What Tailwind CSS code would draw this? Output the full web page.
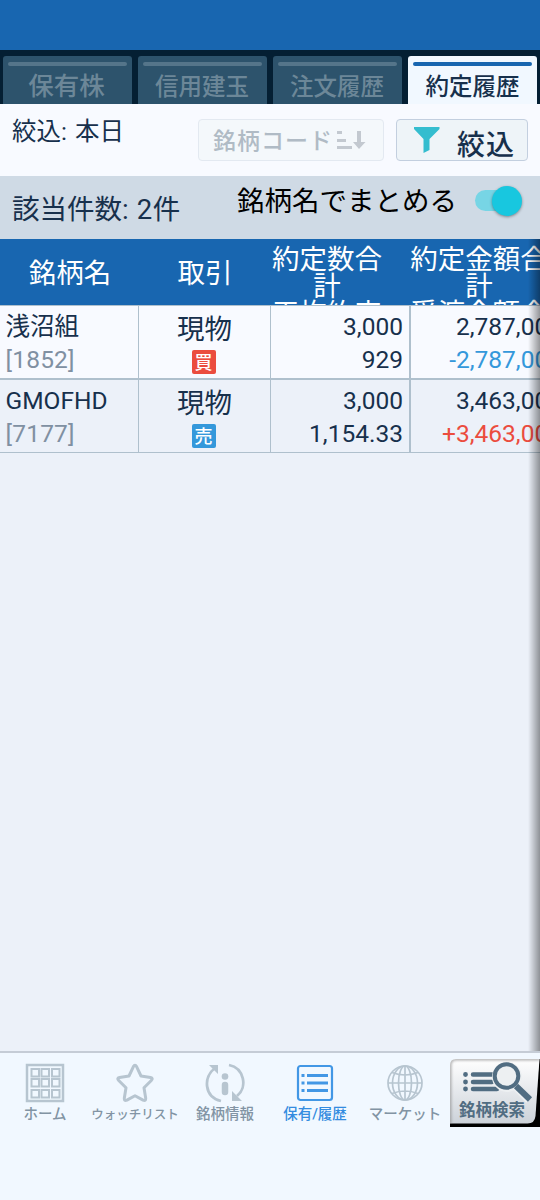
<!DOCTYPE html>
<html lang="ja">
<head>
<meta charset="utf-8">
<title>約定履歴</title>
<script src="https://cdn.jsdelivr.net/npm/@tailwindcss/browser@4"></script>
</head>
<body class="w-[540px] h-[1200px] overflow-hidden bg-[#ecf1f9] text-[#17304c] font-['Roboto','Noto_Sans_CJK_JP',sans-serif] whitespace-nowrap">
<div class="flex flex-col h-[1200px] w-[540px] overflow-hidden">
  <div class="h-[50px] bg-[#1866b0] shrink-0"></div>

  <nav class="h-[54px] shrink-0 bg-[#041f33] pt-[6px] px-[3px] flex gap-[6px] font-medium text-[23.500px] text-[#6c8798] text-center">
    <div class="w-[129px] bg-[#2d536c] rounded-t-[3px] px-[5px] pt-[6px]"><div class="h-1 rounded-full bg-[#55758a]"></div><div class="text-[25.500px] leading-[41px] pr-[2px]">保有株</div></div>
    <div class="w-[129px] bg-[#2d536c] rounded-t-[3px] px-[5px] pt-[6px]"><div class="h-1 rounded-full bg-[#55758a]"></div><div class="leading-[43px] pr-px">信用建玉</div></div>
    <div class="w-[129px] bg-[#2d536c] rounded-t-[3px] px-[5px] pt-[6px]"><div class="h-1 rounded-full bg-[#55758a]"></div><div class="leading-[43px] pr-px">注文履歴</div></div>
    <div class="w-[129px] bg-[#f1f8ff] text-[#17304c] rounded-t-[3px] px-[5px] pt-[6px]"><div class="h-1 rounded-full bg-[#1866b0]"></div><div class="leading-[43px]">約定履歴</div></div>
  </nav>

  <section class="h-[72px] shrink-0 bg-[#f8faff] flex items-start pl-3 pr-3">
    <div class="w-[186px] text-[24.500px] leading-[56px]">絞込<span class="tracking-[1px]">: </span>本日</div>
    <div class="mt-[15px] w-[186px] h-[42px] border border-[#e3e9f1] rounded-[4px] bg-[#f4f8fb] flex items-center pl-[14px] text-[#b0bbc5] text-[23px] font-medium">
      <span class="leading-[40px] tracking-[1px] pt-[3px]">銘柄コード</span>
      <svg class="ml-[3px]" width="30" height="24" viewBox="0 0 30 24" fill="#c3c9d0"><path d="M1 3h5v3H1zM1 11h9v3H1zM1 18h15v3H1zM21 3h4v11h4.500l-6.500 7-6-7h4z"/></svg>
    </div>
    <div class="ml-3 mt-[15px] w-[132px] h-[42px] border-[1.5px] border-[#c3cfdf] rounded-[4px] bg-[#eef4f8] flex items-center pl-[17px]">
      <svg width="26" height="26" viewBox="0 0 26 26" fill="#34bdcf"><path d="M0 0h25.500v2L15.500 12v11l-6 3V12L0 2z"/></svg>
      <span class="ml-[17px] text-[28px] leading-[40px] font-medium pt-[11px] tracking-[1px]">絞込</span>
    </div>
  </section>

  <section class="h-[63px] shrink-0 bg-[#cfdae5] flex text-[27.500px] pl-3">
    <div class="w-[225px] leading-[67px]">該当件数<span class="tracking-[.6px]">: 2</span>件</div>
    <div class="w-[220px] leading-[52px] text-black">銘柄名でまとめる</div>
    <div class="ml-[18px] mt-[14px] w-[40px] h-[21px] rounded-full bg-[#77d5e5] flex items-center"><div class="ml-[17px] w-[30px] h-[30px] rounded-full bg-[#18c7df] shadow-[0_1px_3px_#00000066] shrink-0"></div></div>
  </section>

  <main class="h-[812px] shrink-0 relative">
    <div class="w-[562px]">
      <div class="grid grid-cols-[138px_132px_140px_152px] h-[66px] overflow-hidden bg-[#1866b0] text-white text-[27.500px] text-center">
        <div class="leading-[69px] pl-[2px]">銘柄名</div>
        <div class="leading-[69px] pl-[2px]">取引</div>
        <div class="leading-[27px] pt-[6.500px] -ml-[26px]">約定数合<br>計<br>平均約定</div>
        <div class="leading-[27px] pt-[6.500px] -ml-[14px]">約定金額合<br>計<br>受渡金額合</div>
      </div>
      <div class="grid grid-cols-[139px_132px_140px_151px] h-[74px] border-t border-b border-[#afc0cd] bg-[#f8faff] text-[24.500px]">
        <div class="border-r border-[#afc0cd] pl-[5.500px] pt-[4px] leading-[33px]">浅沼組<br><span class="text-[#8090a2] tracking-[.2px]">[1852]</span></div>
        <div class="border-r border-[#afc0cd] flex flex-col items-center pt-[4px]"><div class="text-[27.500px] leading-[40px]">現物</div><div class="mr-[2px] w-6 h-6 rounded-[2px] bg-[#eb4c3e] text-white text-[18px] leading-[25px] font-medium text-center">買</div></div>
        <div class="border-r-2 border-[#afc0cd] pr-[6px] pt-[4px] leading-[33px] text-right">3,000<br>929</div>
        <div class="pt-[4px] leading-[33px] text-right">2,787,000<br><span class="text-[#3498db]">-2,787,000</span></div>
      </div>
      <div class="grid grid-cols-[139px_132px_140px_151px] h-[74px] border-t border-b border-[#afc0cd] text-[24.500px]">
        <div class="border-r border-[#afc0cd] pl-[5.500px] pt-[4px] leading-[33px]">GMOFHD<br><span class="text-[#8090a2] tracking-[.2px]">[7177]</span></div>
        <div class="border-r border-[#afc0cd] flex flex-col items-center pt-[4px]"><div class="text-[27.500px] leading-[40px]">現物</div><div class="mr-[2px] w-6 h-6 rounded-[2px] bg-[#3498db] text-white text-[18px] leading-[25px] font-medium text-center">売</div></div>
        <div class="border-r-2 border-[#afc0cd] pr-[6px] pt-[4px] leading-[33px] text-right">3,000<br>1,154.33</div>
        <div class="pt-[4px] leading-[33px] text-right">3,463,000<br><span class="text-[#eb4c3e]">+3,463,000</span></div>
      </div>
    </div>
    <div class="absolute right-0 top-0 w-[12px] h-full bg-linear-to-r from-black/0 to-black/40"></div>
  </main>

  <footer class="h-[149px] shrink-0 bg-[#f1f8ff] border-t-2 border-[#c5ccd6] flex font-medium text-[#8294a4] text-[14.500px] leading-[22px] text-center">
    <div class="w-[90px] pt-[10px] flex flex-col items-center">
      <svg width="40" height="40" viewBox="0 0 40 40" fill="none" stroke="#b7c5d0" stroke-width="2.500"><path d="M2 2h36v36H2z"/><path stroke-width="2" d="M6.500 6h7.500v7.500H6.500zM16.500 6H24v7.500h-7.500zM27 6h7.500v7.500H27zM6.500 16H14v7.500H6.500zM16.500 16H24v7.500h-7.500zM27 16h7.500v7.500H27zM6.500 27H14v7.500H6.500zM16.500 27H24v7.500h-7.500zM27 27h7.500v7.500H27z"/></svg>
      <div class="mt-px">ホーム</div>
    </div>
    <div class="w-[90px] pt-[10px] flex flex-col items-center">
      <svg width="40" height="40" viewBox="0 0 40 40" fill="none" stroke="#b7c5d0" stroke-width="3" stroke-linejoin="round"><path d="M18.300 3.800q1.700-3 3.400 0l4.300 9.200 9.500 1.500q3 .8.800 3l-7.300 7.300 1.700 10.500q.2 3-2.600 1.800L20 32.700l-8.100 4.400q-2.800 1.200-2.600-1.800L11 24.800 3.700 17.500q-2.200-2.200.8-3l9.500-1.500z"/></svg>
      <div class="mt-px text-[12.500px]">ウォッチリスト</div>
    </div>
    <div class="w-[90px] pt-[10px] flex flex-col items-center">
      <svg width="40" height="40" viewBox="0 0 40 40" fill="none" stroke="#b7c5d0" stroke-width="2.800"><path d="M10 5C-2 14-1 34 16 38M24 2c15 3 19 22 8 31"/><path d="M4 2h9v9zM27 28v10h10z" fill="#b7c5d0" stroke="none"/><circle cx="20" cy="13.500" r="3.300" fill="#b7c5d0" stroke="none"/><path d="M20 22v7" stroke-width="6.500" stroke-linecap="round"/></svg>
      <div class="mt-px">銘柄情報</div>
    </div>
    <div class="w-[90px] pt-[10px] flex flex-col items-center text-[#348ce0]">
      <svg width="40" height="40" viewBox="0 0 40 40" fill="none" stroke="#4297e5" stroke-width="2.200"><rect x="3" y="3" width="34" height="34" rx="2.500"/><path d="M12 12.500h21M12 20h21M12 27.500h21" stroke-width="2.800"/><path d="M6.500 12.500h3M6.500 20h3M6.500 27.500h3" stroke-width="3"/></svg>
      <div class="mt-px">保有/履歴</div>
    </div>
    <div class="w-[90px] pt-[10px] flex flex-col items-center">
      <svg width="40" height="40" viewBox="0 0 40 40" fill="none" stroke="#b7c5d0" stroke-width="1.700"><circle cx="20" cy="20" r="17"/><ellipse cx="20" cy="20" rx="6.500" ry="17"/><ellipse cx="20" cy="20" rx="12.500" ry="17"/><path d="M20 3v34M3 20h34M7 9.500q13 5 26 0M7 30.500q13-5 26 0"/></svg>
      <div class="mt-px">マーケット</div>
    </div>
    <div class="w-[90px] pt-[5px]">
      <svg width="90" height="70" viewBox="0 0 90 70">
        <defs><linearGradient id="g" x1="0" y1="0" x2="0" y2="1"><stop stop-color="#fff"/><stop offset="1" stop-color="#ccd2d9"/></linearGradient><clipPath id="c"><path d="M6 1h84l-4.500 57q-.8 7.500-8 7.500H0V7q0-6 6-6z"/></clipPath><filter id="f"><feGaussianBlur stdDeviation="1.500"/></filter></defs>
        <path d="M0 10h90v59H0z" fill="#000"/><path d="M0 0h90v12H0z" fill="#f1f8ff"/><path d="M89 1h1v12h-2z" fill="#000"/>
        <path d="M6 1h83.500l-4 57q-.8 7.500-8 7.500H0V7q0-6 6-6z" fill="url(#g)"/>
        <g clip-path="url(#c)"><path filter="url(#f)" d="M0 66V7q0-6 6-6h84" fill="none" stroke="#8a8a8a" stroke-width="2"/></g>
        <g stroke="#516d82" fill="none"><path d="M23 16.500h19M23 24h19M23 31h24" stroke-width="4.500" stroke-linecap="round"/><path d="M15.500 16.500h.01M15.500 24h.01M15.500 31h.01" stroke-width="4.800" stroke-linecap="round"/><circle cx="57" cy="19" r="14" fill="#edf0f2" stroke="#edf0f2" stroke-width="2"/><path d="M65 28l14 14" stroke="#edf0f2" stroke-width="8"/><circle cx="56.500" cy="18" r="11.800" stroke-width="4"/><path d="M66 28l14 13.500" stroke-width="6"/></g>
        <text x="9" y="57.500" font-size="16.500" font-weight="700" fill="#516d82">銘柄検索</text>
      </svg>
    </div>
  </footer>
</div>
</body>
</html>
